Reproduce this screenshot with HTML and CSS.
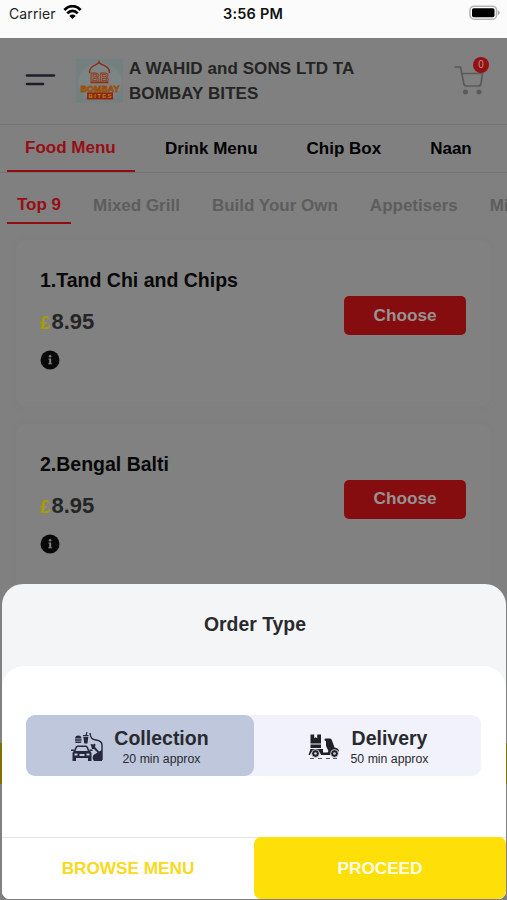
FILE: index.html
```html
<!DOCTYPE html>
<html lang="en">
<head>
<meta charset="utf-8">
<title>Bombay Bites</title>
<link rel="stylesheet" href="styles.css">
</head>
<body>
<div class="phone">
  <div class="status">
    <div class="carrier"><span>Carrier</span>
      <svg width="19" height="14" viewBox="0 0 19 14"><path d="M1.400 5C6-.2 13-.2 17.600 5M4.300 8.400c3-3.300 7.400-3.300 10.400 0" fill="none" stroke="#000" stroke-width="2.700"/><path d="M9.500 14L6.300 10.900q3.200-2.900 6.400 0z"/></svg>
    </div>
    <div class="time">3:56 PM</div>
    <svg class="battery" width="32" height="16" viewBox="0 0 32 16"><rect x="1" y="1.200" width="26.500" height="13" rx="4" fill="#fff" stroke="#b5b5b5" stroke-width="1.600"/><rect x="3" y="3.200" width="22.500" height="9" rx="1.800"/><path d="M28.800 5.200q4 2.500 0 5z" fill="#aaa"/></svg>
  </div>
  <header class="header">
    <svg class="menu-icon" width="32" height="14" viewBox="0 0 32 14" stroke="#1d1e29" stroke-width="2.600" stroke-linecap="round"><path d="M3 2.500h27M3 11h16"/></svg>
    <svg class="logo" width="47" height="44" viewBox="0 0 47 44">
      <rect width="47" height="44" fill="#748080"/><ellipse cx="24" cy="23" rx="22" ry="19" fill="#7d8584"/>
      <path d="M13.500 14C13 8 18 7 21 5q1.500-.5 2-2 .5 1.500 2 2c4 2 9 3 8.500 9M14.500 23.500h18" fill="none" stroke="#8d2b17" stroke-width="1.400"/>
      <g font-family="Liberation Sans" font-weight="bold" text-anchor="middle"><text x="19" y="22.500" font-size="13" fill="#8a8269" stroke="#92351a" stroke-width=".8">B</text><text x="28.500" y="22.500" font-size="13" fill="#8a8269" stroke="#92351a" stroke-width=".8">B</text><text x="24" y="32.500" font-size="9" textLength="39" lengthAdjust="spacingAndGlyphs" fill="#a56b14" stroke="#994d10" stroke-width=".8">BOMBAY</text></g>
      <rect x="11" y="33.500" width="26" height="7" fill="#92230e"/><text x="24" y="39.400" font-family="Liberation Sans" font-weight="bold" font-size="6" text-anchor="middle" textLength="23" fill="#b38a18">BITES</text>
    </svg>
    <h1 class="shop">A WAHID and SONS LTD TA<br>BOMBAY BITES</h1>
    <div class="cart">
      <svg width="30" height="30" viewBox="0 0 30 30"><path d="M.5 2H6.500L9.800 18.500Q10.300 21 12.500 21H24.500Q26.600 21 27 18.500L28.500 8.500H8" fill="none" stroke="#5a5a5a" stroke-width="1.700" stroke-linejoin="round"/><circle cx="11.500" cy="27" r="2.500" fill="#5a5a5a"/><circle cx="25" cy="27" r="2.500" fill="#5a5a5a"/></svg>
      <span class="badge">0</span>
    </div>
  </header>
  <nav class="tabs">
    <a class="tab active">Food Menu</a><a class="tab">Drink Menu</a><a class="tab">Chip Box</a><a class="tab">Naan</a>
  </nav>
  <nav class="subtabs">
    <a class="subtab active">Top 9</a><a class="subtab">Mixed Grill</a><a class="subtab">Build Your Own</a><a class="subtab">Appetisers</a><a class="subtab">Mi</a>
  </nav>
  <main class="list">
    <article class="card">
      <div><h2>1.Tand Chi and Chips</h2><p class="price"><span>£</span>8.95</p>
      <svg class="info" width="20" height="20" viewBox="0 0 20 20"><circle cx="10" cy="10" r="9.500" fill="#080808"/><path d="M8.400 8.600h2.800v4.600h.9v1H8.300v-1h.9V9.600h-.8z" fill="#808080"/><circle cx="10.100" cy="6.200" r="1.300" fill="#808080"/></svg></div>
      <button class="choose">Choose</button>
    </article>
    <article class="card">
      <div><h2>2.Bengal Balti</h2><p class="price"><span>£</span>8.95</p>
      <svg class="info" width="20" height="20" viewBox="0 0 20 20"><circle cx="10" cy="10" r="9.500" fill="#080808"/><path d="M8.400 8.600h2.800v4.600h.9v1H8.300v-1h.9V9.600h-.8z" fill="#808080"/><circle cx="10.100" cy="6.200" r="1.300" fill="#808080"/></svg></div>
      <button class="choose">Choose</button>
    </article>
  </main>
  <div class="basket-bar"></div>
  <section class="sheet">
    <h2 class="sheet-title">Order Type</h2>
    <div class="sheet-body">
      <div class="options">
        <div class="option selected">
          <svg class="kind" width="33" height="31" viewBox="0 0 33 31" fill="#25283a">
            <path d="M4 6.500q.3-3 3.300-3t3.200 3zM4 7.300h6.500v1.400H4zM4 9.500h6.500q0 1.500-1.500 1.500H5.500Q4 11 4 9.500zM12 3h5.500v1.300H12zM12.300 5h5l-.8 6.500h-3.200zM14.500 3l1-3.500h1.200l-.9 3.500z"/>
            <path d="M3.500 19.500l1.600-4q.4-1.200 1.600-1.200h8q1.200 0 1.600 1.200l1.600 4" fill="none" stroke="#25283a" stroke-width="1.600"/>
            <path fill-rule="evenodd" d="M3 19h16q1.500.5 1.500 2.500V29H17v-3H5v3H1.500v-7.500Q1.500 19.500 3 19zM3.500 21.500v2h3v-2zM15.500 21.500v2h3v-2zM8.500 22v2h5v-2zM0 17.500h3v1.600H0zM18.500 17.500h3v1.600h-3z"/>
            <path d="M19 1c.5 5 2 6.500 6 7q6 1 6 5v15" fill="none" stroke="#25283a" stroke-width="1.400"/>
            <path d="M19.500 12l3 .5 1-1 1 1-.5 2.500 4 4.500L31 18v11h-8q-2.500-3-.5-6l4-2.500-3.500-3.500h-2l-.5-2z"/>
          </svg>
          <div class="label"><strong>Collection</strong><small>20 min approx</small></div>
        </div>
        <div class="option">
          <svg class="kind" width="33" height="31" viewBox="0 0 33 31" fill="#202124">
            <path fill-rule="evenodd" d="M2.500 2.500h3.700v3.700l1.500-1 1.500 1V2.500H13v9H2.500zM2.500 12.500H13V16H2.500zM2.500 17H15v3.500h4.500l1-1.500-2.500-5V9q-1.500 0-1.500-1.200T18 6.500h4q1.500 0 2 2l2.500 7q4.500.5 4.500 4h-5l-4 3.500H13q-1-4-5.500-4T2 23H.5z"/>
            <g stroke="#f1f2fb" stroke-width=".8"><circle cx="7.500" cy="21.500" r="3.900"/><circle cx="26.500" cy="21.500" r="3.900"/></g><g fill="#d5d6de"><circle cx="7.500" cy="21.500" r="1.300"/><circle cx="26.500" cy="21.500" r="1.300"/></g>
            <path d="M2 26.500h4M10 26.500h4M18 26.500h4M25 26.500h4" stroke="#55565c" stroke-width="1.200"/>
          </svg>
          <div class="label"><strong>Delivery</strong><small>50 min approx</small></div>
        </div>
      </div>
    </div>
    <footer class="actions"><button class="browse">BROWSE MENU</button><button class="proceed">PROCEED</button></footer>
  </section>
</div>
</body>
</html>
```
FILE: styles.css
```css
* { box-sizing: border-box; }
body { margin: 0; background: #808080; font-family: "Liberation Sans", Arial, sans-serif; }
h1, h2, p { margin: 0; }
button { border: 0; padding: 0; font: bold 17.200px/1 "Liberation Sans", Arial, sans-serif; }
.phone { position: relative; width: 507px; height: 900px; overflow: hidden; display: flex; flex-direction: column; }
.status { height: 38px; flex: none; background: #fbfbfb; display: grid; grid-template-columns: 1fr auto 1fr; padding: 5px 6px 0 9px; align-items: start; font: 14px/18px Inter, sans-serif; color: #222; }
.carrier { display: flex; gap: 7px; letter-spacing: .1px; }
.time { font-weight: 600; font-size: 14.500px; color: #111; margin-left: -4px; letter-spacing: .2px; }
.battery { justify-self: end; }
.header { height: 87px; flex: none; display: flex; align-items: flex-start; border-bottom: 1px solid #747474; padding: 21px 18px 0 24px; }
.menu-icon { margin-top: 14px; }
.logo { margin-left: 20px; }
.shop { margin: -2px 0 0 6px; font-size: 17px; line-height: 24.500px; letter-spacing: .08px; color: #242424; white-space: nowrap; }
.cart { position: relative; margin: 6px 0 0 auto; width: 35px; height: 32px; }
.badge { position: absolute; top: -8px; right: 0; width: 16px; height: 16px; border-radius: 50%; background: #960f11; color: #a99; font-size: 10px; line-height: 16px; text-align: center; }
.tabs { height: 48px; flex: none; display: flex; border-bottom: 1px solid #747474; padding-left: 7px; overflow: hidden; }
.tab { flex: none; padding: 14px 0 0; font-weight: bold; font-size: 17px; line-height: 20px; color: #020202; margin-right: 49px; white-space: nowrap; }
.tab.active { height: 47px; width: 128px; padding: 13px 0 0 18px; margin-right: 30px; border-bottom: 2px solid #8f0c12; color: #970e15; }
.subtabs { height: 67px; flex: none; display: flex; padding-left: 7px; overflow: hidden; }
.subtab { flex: none; padding-top: 23px; font-weight: bold; font-size: 17px; line-height: 20px; color: #5d5d5d; white-space: nowrap; margin-right: 32px; }
.subtab.active { width: 64px; height: 51px; padding: 22px 0 0 10px; border-bottom: 2px solid #8f0c12; color: #970e15; margin-right: 22px; }
.list { padding: 0 16px; display: flex; flex-direction: column; gap: 17.500px; }
.card { height: 166px; flex: none; padding: 28px 25px 0 24px; border-radius: 9px; background: #818181; box-shadow: 0 0 5px #7d7d7d; display: flex; justify-content: space-between; }
.card h2 { font-size: 19.500px; line-height: 24px; color: #080808; }
.price { margin-top: 17px; font-weight: bold; font-size: 22px; line-height: 26px; color: #252525; }
.price span { display: inline-block; width: 11.500px; color: #a49d00; font-size: 18px; }
.info { display: block; margin-top: 14px; }
.choose { width: 122px; height: 39px; margin-top: 28px; border-radius: 5px; background: #850d0f; color: #979393; }
.basket-bar { position: absolute; left: 0; right: 0; top: 743px; height: 41px; background: #807000; }
.sheet { position: absolute; left: 2px; right: 1px; bottom: 1px; height: 315.500px; border-radius: 21px 21px 8px 8px; background: #f3f5f6; overflow: hidden; display: flex; flex-direction: column; }
.sheet-title { height: 82px; flex: none; padding-left: 2px; font-size: 19.400px; line-height: 81px; color: #292a2d; text-align: center; }
.sheet-body { flex: 1; background: #fff; border-radius: 22px 22px 0 0; padding: 49px 25px 0 24px; }
.options { display: grid; grid-template-columns: 1fr 1fr; height: 61px; border-radius: 9px; background: #f1f2fb; }
.option { display: flex; align-items: flex-start; padding: 12px 0 0 45px; }
.option + .option { padding-left: 54px; }
.selected { background: #bfc7dd; border-radius: 9px; }
.kind { flex: none; margin-top: 5px; }
.label { width: 95px; margin-left: 10px; display: flex; flex-direction: column; align-items: center; white-space: nowrap; color: #292a2f; }
.option + .option .label { width: 78px; }
.label strong { font-size: 19.500px; line-height: 22px; }
.label small { font-size: 12.300px; line-height: 20px; }
.actions { height: 62px; flex: none; display: grid; grid-template-columns: 1fr 1fr; background: #fff; border-top: 1px solid #e5e5e8; }
.browse { background: #fff; color: #f8d91d; }
.proceed { background: #ffdf08; color: #fffde5; border-radius: 7px; margin-top: -1px; padding-top: 2px; }
```
